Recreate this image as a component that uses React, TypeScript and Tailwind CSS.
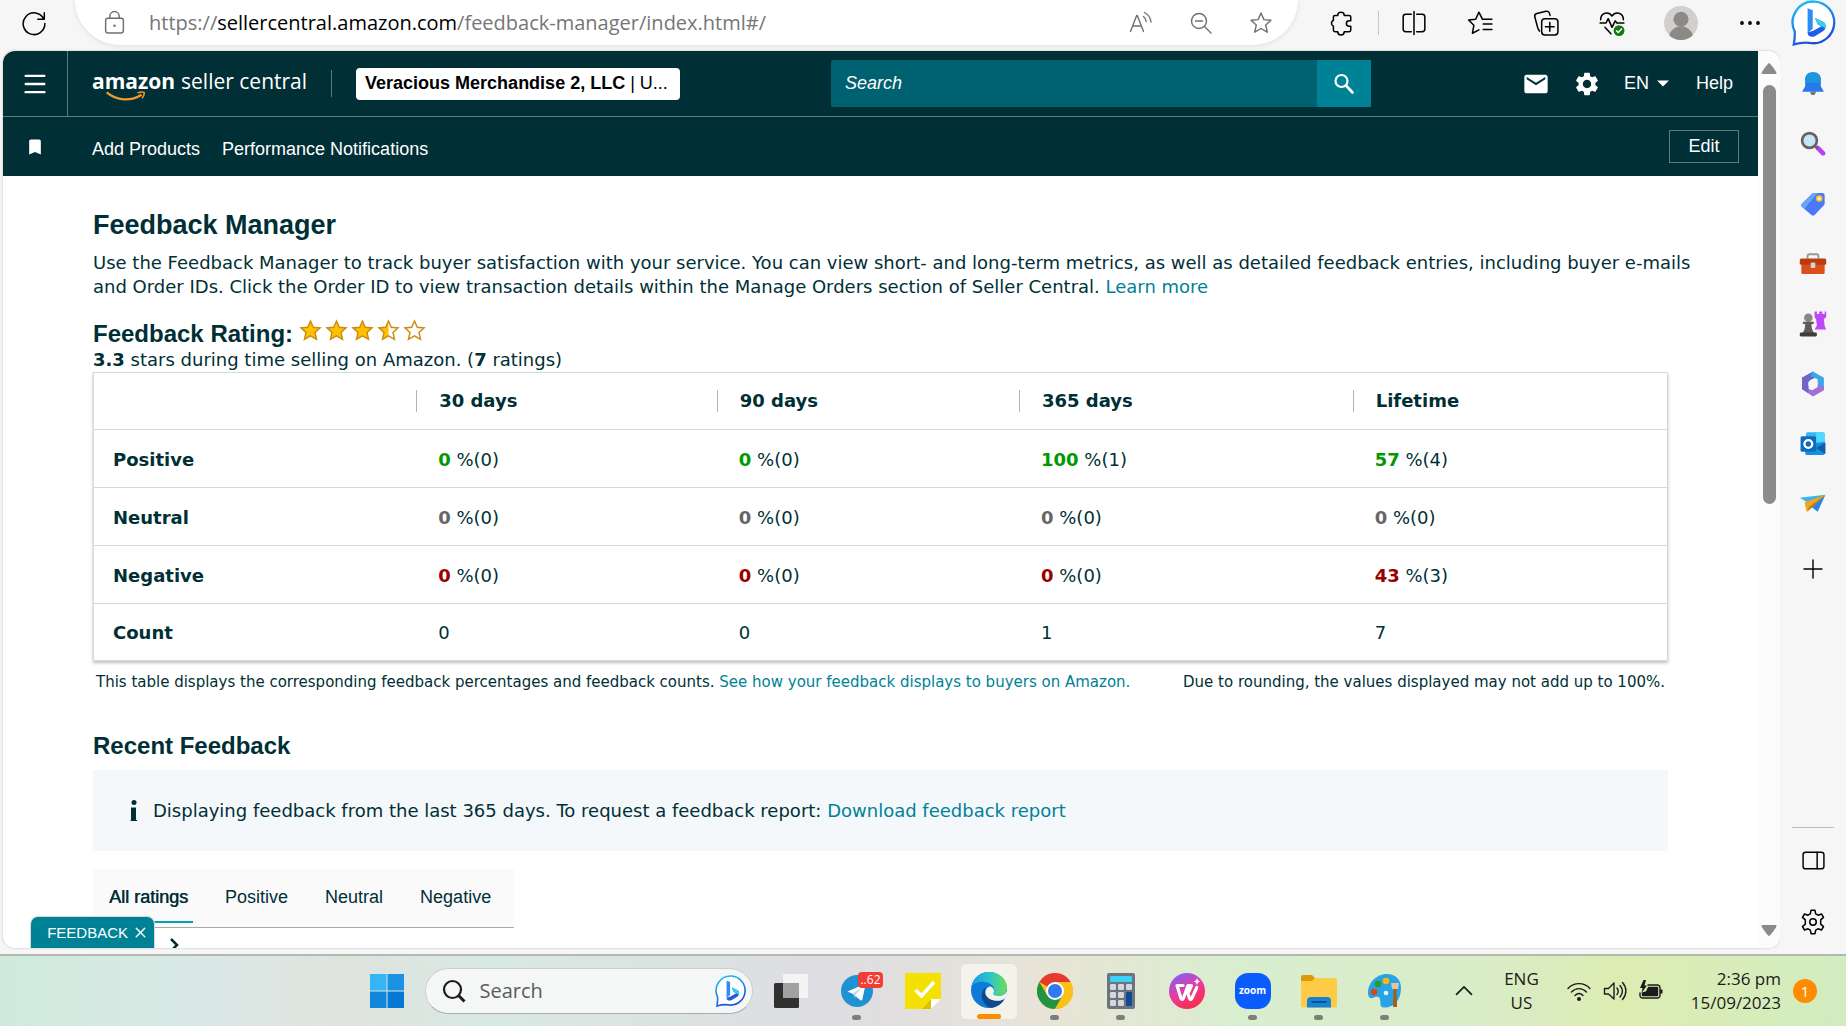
import React from 'react'
import { MdBookmark, MdEmail, MdSettings } from 'react-icons/md'
import { Menu, X } from 'lucide-react'

interface IconProps {
    children: React.ReactNode
    size?: number
    className?: string
}

// 24x24 outline icon
const Outline = ({ children, size = 24, className = '' }: IconProps) => (
    <svg
        width={size}
        height={size}
        viewBox="0 0 24 24"
        fill="none"
        stroke="currentColor"
        strokeWidth="1.4"
        strokeLinecap="round"
        strokeLinejoin="round"
        className={`shrink-0 ${className}`}
        aria-hidden="true"
    >
        {children}
    </svg>
)

// 36x36 coloured app icon
const Glyph = ({ children, size = 36, className = '' }: IconProps) => (
    <svg width={size} height={size} viewBox="0 0 36 36" className={`shrink-0 ${className}`} aria-hidden="true">
        {children}
    </svg>
)

const STAR = 'M12 2 L14.9 8.6 L22 9.3 L16.7 14 L18.3 21.2 L12 17.5 L5.7 21.2 L7.3 14 L2 9.3 L9.1 8.6 Z'
const COG = 'M10.2 1.2h3.6l.7 3.3 2.1 1.2 3.2-1.1 1.9 3.1-2.6 2.3v4l2.6 2.3-1.9 3.1-3.2-1.1-2.1 1.2-.7 3.3h-3.6l-.7-3.3-2.1-1.2-3.2 1.1-1.9-3.1L4.9 14v-4L2.3 7.7l1.9-3.1 3.2 1.1 2.1-1.2z'

const BingIcon = ({ id, size }: { id: string; size: number }) => (
    <Glyph size={size}>
        <defs>
            <linearGradient id={id} x1="0" y1="0" x2="0.4" y2="1">
                <stop offset="0" stopColor="#1fc8f5" />
                <stop offset="1" stopColor="#1b4fdb" />
            </linearGradient>
        </defs>
        <path
            d="M18.5 1.2a16.3 16.3 0 1 1-2 32.6c-5-.9-9-.6-14.3 1 .6-3.400 1-6.500.7-10.200A16.300 16.300 0 0 1 18.500 1.200z"
            fill="#fff"
            stroke={`url(#${id})`}
            strokeWidth="1.8"
        />
        <path d="M13 6.500 17 8v14.500l-4 3.500z" fill="#2f8cf5" />
        <path d="M13 25.500c0 3.500 3.500 4 6 2.600l6-3.600c2.800-1.800 2.800-5.800.4-7.300l-6.600-3.200 2.200 5.200 2.800 1.300-6.400 3.600z" fill="#1f5fe8" />
        <path d="m18.800 14 6.600 3.200c1.700 1 2.200 3 1.500 5l-3.100-1.700-2.800-1.300z" fill="#2ed3ec" />
    </Glyph>
)

const toolbarIcons = [
    {
        name: 'Split screen',
        art: (
            <path d="M9.500 4H4.500A2.500 2.500 0 0 0 2 6.500v11A2.500 2.500 0 0 0 4.500 20h5M14.500 4h5A2.500 2.500 0 0 1 22 6.500v11a2.500 2.500 0 0 1-2.500 2.500h-5M12 1.500v21" />
        ),
    },
    {
        name: 'Favourites',
        art: <path d="M16 8.500h-1.800L11 2 8 8.500l-6.500.8 4.800 4.800L5 21.500l6-3.200M16.500 8.500H23M15 13h8M15 18h8" />,
    },
    {
        name: 'Collections',
        art: (
            <>
                <rect x="8" y="8" width="15" height="15" rx="3" />
                <path d="M15.500 11.500v8M11.500 15.500h8M6 19.500 4.500 17 1.700 6.500A2.600 2.600 0 0 1 3.500 3.300L12 1.200a2.600 2.600 0 0 1 3.200 1.900l.5 1.900" />
            </>
        ),
    },
]

const BrowserToolbar = () => (
    <header className="flex h-[51px] shrink-0 items-start bg-[#f6f6f6] text-black">
        <button aria-label="Refresh" className="mt-[10px] ml-[21px]">
            <Outline size={26}>
                <path d="M21.500 2.500v6h-6M21 8.300A10 10 0 1 0 22 12.500" />
            </Outline>
        </button>
        <div className="ml-7 flex h-[45px] flex-1 items-center rounded-b-full rounded-tl-3xl rounded-tr-3xl bg-white pr-[25px] pl-[27px] text-[#6f6f6f] shadow-[0_1px_5px_#0000001a]">
            <Outline size={25}>
                <rect x="3.500" y="8" width="17" height="14" rx="2" />
                <path d="M7.500 8V6a4.500 4.500 0 0 1 9 0v2" />
                <circle cx="12" cy="15" r="1.200" fill="currentColor" stroke="none" />
            </Outline>
            <p className="ml-[22px] flex-1 font-['Open_Sans',sans-serif] text-[20px] whitespace-nowrap text-[#767676]">
                https://<span className="text-black">sellercentral.amazon.com</span>/feedback-manager/index.html#/
            </p>
            <div className="flex items-center gap-9">
                <button aria-label="Read aloud">
                    <Outline>
                        <path d="m1.500 20.500 6.200-16h.6l6.200 16M3.700 15h8.600M14.500 5.500c1.700 1.200 2.500 2.800 2.700 5M15.500 1.500c3.500 1.800 5.800 5 6.500 9.500" />
                    </Outline>
                </button>
                <button aria-label="Zoom out">
                    <Outline>
                        <circle cx="10" cy="10" r="7.500" />
                        <path d="m15.500 15.500 6.500 6.500M6.500 10h7" />
                    </Outline>
                </button>
                <button aria-label="Add to favourites">
                    <Outline>
                        <path d={STAR} />
                    </Outline>
                </button>
            </div>
        </div>
        <div className="flex h-[45px] items-center pl-[30px]">
            <button aria-label="Extensions">
                <Outline size={26}>
                    <path d="M9 5a3 3 0 0 1 6 0h4.500a1.500 1.500 0 0 1 1.500 1.500V10h-1.500a2.500 2.500 0 0 0 0 5H21v3.500a1.500 1.500 0 0 1-1.500 1.500H15a3 3 0 0 1-6 0H6.500A1.500 1.500 0 0 1 5 18.500V15a3 3 0 0 1 0-5.500v-3A1.500 1.500 0 0 1 6.500 5z" />
                </Outline>
            </button>
            <span className="mr-[22px] ml-6 h-6 w-px bg-[#c8c8c8]" />
            <div className="flex gap-10">
                {toolbarIcons.map((icon) => (
                    <button key={icon.name} aria-label={icon.name}>
                        <Outline size={26}>{icon.art}</Outline>
                    </button>
                ))}
                <button aria-label="Browser essentials">
                    <Outline size={26}>
                        <path d="M1.500 9c0-7 7.500-8 10.500-3.500C15 1 22.500 2 22.500 9M1 12h5.500l2-4 3.500 8 3-6 1.500 2H23M5.500 16l5.500 6" />
                        <circle cx="18.500" cy="19" r="5" fill="#107c10" stroke="none" />
                        <path d="m16.200 19.200 1.600 1.600 3-3.200" stroke="#fff" />
                    </Outline>
                </button>
            </div>
            <button aria-label="Profile" className="ml-[39px]">
                <Glyph size={34}>
                    <circle cx="18" cy="18" r="18" fill="#d2d0ce" />
                    <circle cx="18" cy="14" r="8" fill="#8d8985" />
                    <path d="M5.500 31a13 13 0 0 1 25 0 18 18 0 0 1-25 0z" fill="#8d8985" />
                </Glyph>
            </button>
            <button aria-label="Settings and more" className="ml-10">
                <Outline>
                    <g fill="currentColor" stroke="none">
                        <circle cx="4" cy="12" r="1.900" />
                        <circle cx="12" cy="12" r="1.900" />
                        <circle cx="20" cy="12" r="1.900" />
                    </g>
                </Outline>
            </button>
            <button aria-label="Bing chat" className="mr-[9px] ml-[29px]">
                <BingIcon id="bing-top" size={46} />
            </button>
        </div>
    </header>
)

const SellerHeader = () => (
    <div className="bg-[#002f36] font-['Liberation_Sans',sans-serif] text-[18px] text-white">
        <div className="flex h-[66px] items-center border-b border-[#5f7a7d]">
            <button aria-label="Menu" className="flex h-full w-[65px] items-center justify-center border-r border-[#5f7a7d]">
                <Menu size={28} strokeWidth={2} />
            </button>
            <a href="#home" className="ml-6 flex items-start pb-[5px] font-['Open_Sans',sans-serif] text-[21px] leading-7">
                <span className="relative mr-[6px] font-bold">
                    amazon
                    <svg viewBox="0 0 44 12" className="absolute top-6 left-3 h-[11px] w-[44px]" fill="none" aria-hidden="true">
                        <path d="M1 1.500c11 9.500 26 10 38 2.500" stroke="#f19a2c" strokeWidth="2.600" />
                        <path d="M34.500 1.800c3-.8 5.500-1 7.200-.3.600 2-.6 4.500-2.200 6.500" stroke="#f19a2c" strokeWidth="1.700" />
                    </svg>
                </span>
                seller central
            </a>
            <span className="mr-6 ml-6 h-[27px] w-px bg-[#5f7a7d]" />
            <button className="h-8 w-[324px] shrink-0 rounded-sm bg-white px-[9px] text-left whitespace-nowrap text-black">
                <b>Veracious Merchandise 2, LLC</b> | U...
            </button>
            <form className="ml-[8.6%] flex h-[47px] w-[540px] shrink-0 text-white">
                <input
                    type="text"
                    aria-label="Search"
                    placeholder="Search"
                    className="min-w-0 flex-1 rounded-l-xs bg-[#006170] px-[14px] italic placeholder:text-white"
                />
                <button type="button" aria-label="Go" className="flex w-[54px] items-center justify-center bg-[#008296]">
                    <Outline size={24}>
                        <circle cx="9.500" cy="9" r="6" strokeWidth="2.200" />
                        <path d="m14 13.500 6.500 7" strokeWidth="2.600" />
                    </Outline>
                </button>
            </form>
            <nav className="ml-auto flex items-center pr-[25px]">
                <a href="#mail" aria-label="Messages">
                    <MdEmail size={28} />
                </a>
                <a href="#settings" aria-label="Settings" className="ml-[23px]">
                    <MdSettings size={28} />
                </a>
                <button className="ml-[23px] flex items-center gap-2">
                    EN
                    <svg width="12" height="7" viewBox="0 0 12 7" fill="currentColor" aria-hidden="true">
                        <path d="M0 0.500h12l-6 6z" />
                    </svg>
                </button>
                <a href="#help" className="ml-[27px]">Help</a>
            </nav>
        </div>
        <div className="flex h-[59px] items-center pr-[19px]">
            <MdBookmark size={20} className="ml-[22px]" />
            <nav className="ml-[47px] flex gap-[22px] pt-[6px]">
                <a href="#add-products">Add Products</a>
                <a href="#notifications">Performance Notifications</a>
            </nav>
            <button className="ml-auto h-[33px] w-[70px] border border-[#5f7a7d]">Edit</button>
        </div>
    </div>
)

const columns = ['30 days', '90 days', '365 days', 'Lifetime']
const ratings = [
    { label: 'Positive', color: 'text-[#009900]', values: [[0, 0], [0, 0], [100, 1], [57, 4]] },
    { label: 'Neutral', color: 'text-[#666666]', values: [[0, 0], [0, 0], [0, 0], [0, 0]] },
    { label: 'Negative', color: 'text-[#990000]', values: [[0, 0], [0, 0], [0, 0], [43, 3]] },
]
const counts = [0, 0, 1, 7]

const RatingTable = () => (
    <table className="w-full table-fixed border border-[#d5dbdb] text-left shadow-[0_2px_3px_#00000040]">
        <colgroup>
            <col className="w-[20.5%]" />
            <col className="w-[19.1%]" />
            <col className="w-[19.2%]" />
            <col className="w-[21.2%]" />
            <col className="w-[20%]" />
        </colgroup>
        <thead>
            <tr className="h-[57px]">
                <td />
                {columns.map((name) => (
                    <th key={name}>
                        <div className="flex h-[22px] items-center border-l border-[#aab7b8] pl-[22px]">{name}</div>
                    </th>
                ))}
            </tr>
        </thead>
        <tbody>
            {ratings.map((row) => (
                <tr key={row.label} className="h-[58px] border-t border-[#d5dbdb]">
                    <th className="pt-[2px] pl-[19px]">{row.label}</th>
                    {row.values.map(([percent, count], i) => (
                        <td key={i} className="pt-[2px] pl-[22px]">
                            <b className={row.color}>{percent}</b> %({count})
                        </td>
                    ))}
                </tr>
            ))}
            <tr className="h-[57px] border-t border-[#d5dbdb]">
                <th className="pt-[2px] pl-[19px]">Count</th>
                {counts.map((count, i) => (
                    <td key={i} className="pt-[2px] pl-[22px]">{count}</td>
                ))}
            </tr>
        </tbody>
    </table>
)

const Stars = () => (
    <div className="flex gap-[3px]" role="img" aria-label="3.3 out of 5 stars">
        {['full', 'full', 'full', 'half', 'empty'].map((kind, i) => (
            <svg key={i} width="23" height="23" viewBox="0 0 24 24" aria-hidden="true">
                <path d={STAR} fill={kind === 'full' ? '#ffc000' : '#fff'} />
                {kind === 'half' && <path d="M12 2v15.500l-6.300 3.700L7.300 14 2 9.300l7.100-.7z" fill="#ffc000" />}
                <path d={STAR} fill="none" stroke="#cd8b12" strokeWidth="1.500" />
            </svg>
        ))}
    </div>
)

const tabs = ['All ratings', 'Positive', 'Neutral', 'Negative']

const FeedbackPage = () => (
    <main className="relative min-h-0 flex-1 overflow-hidden pr-[90px] pl-[90px] font-['DejaVu_Sans',sans-serif] text-[18px] leading-6 text-[#002f36]">
        <h1 className="pt-[33px] font-['Liberation_Sans',sans-serif] text-[27px] leading-8 font-bold">Feedback Manager</h1>
        <p className="-mr-6 mt-[10px]">
            Use the Feedback Manager to track buyer satisfaction with your service. You can view short- and long-term metrics, as well as
            detailed feedback entries, including buyer e-mails and Order IDs. Click the Order ID to view transaction details within the
            Manage Orders section of Seller Central.{' '}
            <a href="#learn" className="text-[#008296]">Learn more</a>
        </p>
        <div className="mt-5 flex h-[29px] items-start gap-[6px]">
            <h2 className="font-['Liberation_Sans',sans-serif] text-[24px] leading-[30px] font-bold">Feedback Rating:</h2>
            <Stars />
        </div>
        <p>
            <b>3.3</b> stars during time selling on Amazon. (<b>7</b> ratings)
        </p>
        <RatingTable />
        <div className="flex justify-between px-[3px] pt-[9px] text-[15px]">
            <p>
                This table displays the corresponding feedback percentages and feedback counts.{' '}
                <a href="#display" className="text-[#008296]">See how your feedback displays to buyers on Amazon.</a>
            </p>
            <p>Due to rounding, the values displayed may not add up to 100%.</p>
        </div>
        <h2 className="mt-9 font-['Liberation_Sans',sans-serif] text-[24px] leading-8 font-bold">Recent Feedback</h2>
        <div className="mt-2 flex h-[81px] items-center bg-[#f4f8fa] pl-[37px]">
            <svg width="7" height="22" viewBox="0 0 7 22" fill="currentColor" className="mr-4" aria-hidden="true">
                <circle cx="4" cy="2.500" r="2.500" />
                <path d="M1 7.500h5V20h1v1H.5v-1H1z" />
            </svg>
            <p>
                Displaying feedback from the last 365 days. To request a feedback report:{' '}
                <a href="#report" className="text-[#008296]">Download feedback report</a>
            </p>
        </div>
        <div className="mt-[18px] flex h-[59px] w-fit gap-4 border-b border-[#aaaaaa] bg-[#fafafa] font-['Liberation_Sans',sans-serif]">
            {tabs.map((tab, i) => (
                <button
                    key={tab}
                    className={
                        i === 0
                            ? 'mb-1 border-b-2 border-[#00a4b4] pt-1 pr-[5px] pl-4 [text-shadow:0.5px_0_currentColor]'
                            : 'mb-1 border-b-2 border-transparent pt-1 pr-[5px] pl-4 last:pr-[23px]'
                    }
                >
                    {tab}
                </button>
            ))}
        </div>
        <svg width="12" height="16" viewBox="0 0 12 16" fill="none" stroke="currentColor" strokeWidth="2.500" className="mt-[9px] ml-[76px]" aria-hidden="true">
            <path d="m2 2 6 6-6 6" />
        </svg>
        <button className="absolute bottom-0 left-[27px] flex h-8 w-[125px] items-center justify-end gap-1 rounded-t-lg border border-b-0 border-[#d5dbdb] bg-[#008296] pr-[5px] font-['Liberation_Sans',sans-serif] text-[15px] text-white">
            FEEDBACK
            <X size={17} strokeWidth={2} />
        </button>
    </main>
)

const sidebarIcons = [
    {
        name: 'Notifications',
        art: (
            <>
                <path d="M14 28h8l-2 4h-4z" fill="#77736f" />
                <path d="M18 3c7 0 10 4 10 10v8l4 7H4l4-7v-8C8 7 11 3 18 3z" fill="#2779ea" />
                <path d="M18 3c7 0 10 4 10 10v3H8v-3C8 7 11 3 18 3z" fill="#1f95e0" />
            </>
        ),
    },
    {
        name: 'Search',
        art: (
            <>
                <path d="m24 23 7 7" stroke="#c03cf5" strokeWidth="6" strokeLinecap="round" />
                <path d="m20 20 4 4" stroke="#666" strokeWidth="3" />
                <circle cx="13.500" cy="13.500" r="9.500" fill="#c5e6fa" stroke="#66625f" strokeWidth="3.400" />
            </>
        ),
    },
    {
        name: 'Shopping',
        art: (
            <>
                <path d="M19 4h11a3 3 0 0 1 3 3v10a4 4 0 0 1-1.300 3L20 32a3 3 0 0 1-4 0L4 22a3 3 0 0 1 0-4.500L16.500 5A4 4 0 0 1 19 4z" fill="#4a78f8" />
                <path d="M19 4h5L7 24l-3-2a3 3 0 0 1 0-4.500L16.500 5A4 4 0 0 1 19 4z" fill="#68a5fb" />
                <circle cx="26" cy="11" r="3" fill="#fff" stroke="#f4cb1d" strokeWidth="2.400" />
            </>
        ),
    },
    {
        name: 'Tools',
        art: (
            <>
                <path d="M11 11V8a2.500 2.500 0 0 1 2.500-2.500h9A2.500 2.500 0 0 1 25 8v3" fill="none" stroke="#9a9693" strokeWidth="2.400" />
                <rect x="3" y="17" width="30" height="14" rx="2" fill="#dc4f1c" />
                <rect x="1" y="11" width="34" height="8" rx="2" fill="#b93c10" />
                <rect x="15" y="16" width="6" height="7" rx="1.500" fill="#d5d2cf" />
            </>
        ),
    },
    {
        name: 'Games',
        art: (
            <>
                <path d="M20 2h3v3h3V2h4v3h3V2h2v7l-3 3 1 9 2 4H20l3-5-1-8-2-3z" fill="#bd4af8" />
                <circle cx="12" cy="10" r="5.500" fill="#8b8785" />
                <path d="M5 15h14v3h-3c0 5 1 9 4 12H4c3-3 4-7 4-12H5z" fill="#5f5b59" />
                <rect x="1" y="29" width="22" height="5" rx="1.500" fill="#3f3c3a" />
            </>
        ),
    },
    {
        name: 'Microsoft 365',
        art: (
            <>
                <path d="M18 2 4 9.500v15L12 30V15l10-6z" fill="#4c70cf" />
                <path d="m18 2 14 8v16l-8-5v-9l-9-4z" fill="#39a7e8" />
                <path d="M4 24.500 18 34l14-8v-4l-8-4v4l-7 4-5-2z" fill="#a36fd4" />
                <path d="M4 9.500v15l8 5V15l4-9z" fill="#7564c8" />
                <circle cx="18" cy="18" r="6" fill="#f6f6f6" />
            </>
        ),
    },
    {
        name: 'Outlook',
        art: (
            <>
                <rect x="9" y="3" width="24" height="24" rx="2" fill="#35b8f1" />
                <path d="M22 3h9a2 2 0 0 1 2 2v11H22z" fill="#50d9ff" />
                <path d="M8 19 33 15v15a2 2 0 0 1-2 2H10a2 2 0 0 1-2-2z" fill="#1490df" />
                <path d="m22 23 12-7v15z" fill="#0f5ea8" />
                <rect x="2" y="8" width="20" height="20" rx="2" fill="#0f6cbd" />
                <circle cx="12" cy="18" r="5" fill="none" stroke="#fff" strokeWidth="3" />
            </>
        ),
    },
    {
        name: 'Drop',
        art: (
            <>
                <path d="M1 10 34 6 14 18z" fill="#3eb1f0" />
                <path d="M34 6 15 21l9 7z" fill="#2b83ea" />
                <path d="M34 6 7 16l3 12z" fill="#f2a51e" />
                <path d="m34 6-20 15-4 7 5-4z" fill="#c47b0a" />
            </>
        ),
    },
]

const Sidebar = () => (
    <aside className="flex w-[66px] shrink-0 flex-col items-center bg-[#f6f6f6] pt-[19px] text-black">
        <div className="flex flex-col gap-8">
            {sidebarIcons.map((icon) => (
                <button key={icon.name} aria-label={icon.name}>
                    <Glyph size={28}>{icon.art}</Glyph>
                </button>
            ))}
        </div>
        <button aria-label="Add" className="mt-[39px]">
            <Outline size={24}>
                <path d="M12 3v18M3 12h18" />
            </Outline>
        </button>
        <div className="mt-auto flex w-[42px] flex-col items-center gap-9 border-t border-[#bdbdbd] pt-5 pb-[19px]">
            <button aria-label="Hide sidebar">
                <Outline size={25}>
                    <rect x="2" y="4" width="20" height="16" rx="2.500" />
                    <path d="M15.500 4v16" />
                </Outline>
            </button>
            <button aria-label="Sidebar settings">
                <Outline size={26}>
                    <path d={COG} />
                    <circle cx="12" cy="12" r="3" />
                </Outline>
            </button>
        </div>
    </aside>
)

const Scrollbar = () => (
    <div className="flex w-[22px] shrink-0 flex-col items-center bg-[#fcfcfc] py-3 text-[#8b8b8b]">
        <svg width="16" height="11" viewBox="0 0 16 11" fill="currentColor" aria-hidden="true">
            <path d="M8 0c1 0 8 9 7.500 10.500S1 11.500.5 10.500 7 0 8 0z" />
        </svg>
        <div className="mt-[11px] h-[48%] w-[13px] rounded-full bg-[#8b8b8b]" />
        <svg width="16" height="11" viewBox="0 0 16 11" fill="currentColor" className="mt-auto" aria-hidden="true">
            <path d="M8 11c1 0 8-9 7.500-10.500S1-.5.500.5 7 11 8 11z" />
        </svg>
    </div>
)

const taskbarApps = [
    {
        name: 'Task view',
        state: '',
        art: (
            <>
                <rect x="1" y="10" width="25" height="25" rx="1.500" fill="#30302f" />
                <rect x="10" y="1" width="25" height="24" rx="1" fill="#f4f4f4" />
                <path d="M10 10h16v15H10z" fill="#a2a2a2" />
            </>
        ),
    },
    {
        name: 'Telegram',
        state: 'open',
        badge: '..62',
        art: (
            <>
                <circle cx="18" cy="18" r="16" fill="#1f93d1" />
                <path d="M8.500 18.500 25 11.500c1-.4 1.500.3 1.300 1.200l-3 13.800c-.2 1-1 1.200-1.800.7L14 21z" fill="#fff" />
                <path d="m14 20.500 9-6.500-6.500 8-.3 3.500z" fill="#b8d9ee" />
            </>
        ),
    },
    {
        name: 'Notes',
        state: '',
        art: (
            <>
                <path d="M0 0h36v26L26 36H0z" fill="#f5e003" />
                <path d="M26 26 17 36h9z" fill="#d8c300" />
                <path d="M26 26h10L26 36z" fill="#fff" />
                <path d="m10.500 17 6 6L29 9" fill="none" stroke="#fff" strokeWidth="3.600" />
            </>
        ),
    },
    {
        name: 'Edge',
        state: 'active',
        art: (
            <>
                <defs>
                    <linearGradient id="edge-wave" x1="0" y1="0.500" x2="1" y2="0.500">
                        <stop offset="0" stopColor="#1b9de2" />
                        <stop offset="0.500" stopColor="#2ac3d0" />
                        <stop offset="1" stopColor="#6be04f" />
                    </linearGradient>
                </defs>
                <circle cx="18" cy="18" r="18" fill="#0c7ad6" />
                <path d="M.5 15C2 6 9 0 18 0c10 0 18 7 18 15.500 0 5-4 8.500-8.500 8.500-4 0-6-1.500-5-3 2.500-4-.5-9-6.500-10.500C9 8.500 3 11 .5 15z" fill="url(#edge-wave)" />
                <path d="M15 15c-4 3-5.500 8-3.500 13 2 4.500 6 8 9.500 7.700 5.500-1 10-4 12.300-8.700-7 4-17 1-18.800-5-.8-2.600-.3-5 .5-7z" fill="#114a8b" />
                <path d="M22.500 21c-1 1.500 1 3 5 3 4 0 7-2 8-5 1 4-.7 7-2.200 8-7 4-17 1-18.800-5-.6-5 2.500-7.500 5-7.500 3 1 4.500 4 3 6.500z" fill="#f0f4ee" />
            </>
        ),
    },
    {
        name: 'Chrome',
        state: 'open',
        art: (
            <>
                <circle cx="18" cy="18" r="18" fill="#fbc116" />
                <path d="M18 18 2.400 9A18 18 0 0 1 33.600 9z" fill="#e33b2e" />
                <path d="M2.400 9A18 18 0 0 0 18 36l7.800-13.500L18 18 10.200 22.500z" fill="#229342" />
                <path d="M18 9h15.600A18 18 0 0 1 18 36l7.800-13.500z" fill="#fbc116" />
                <circle cx="18" cy="18" r="9" fill="#fff" />
                <circle cx="18" cy="18" r="7" fill="#2f7af0" />
            </>
        ),
    },
    {
        name: 'Calculator',
        state: 'open',
        art: (
            <>
                <rect x="4" y="0" width="28" height="36" rx="2" fill="#6c757d" />
                <rect x="7" y="3" width="22" height="6" rx="1" fill="#3cd2f5" />
                {[11, 19, 27].map((y) => (
                    <g key={y} fill="#d4d8de">
                        <rect x="7" y={y} width="6" height="6" rx="1.200" />
                        <rect x="15" y={y} width="6" height="6" rx="1.200" />
                    </g>
                ))}
                <rect x="23" y="11" width="6" height="6" rx="1.200" fill="#d4d8de" />
                <rect x="23" y="19" width="6" height="14" rx="1.200" fill="#0f4a94" />
            </>
        ),
    },
    {
        name: 'WPS Office',
        state: '',
        art: (
            <>
                <defs>
                    <linearGradient id="wps" x1="0.200" y1="0" x2="0.700" y2="1">
                        <stop offset="0" stopColor="#7d62fa" />
                        <stop offset="0.500" stopColor="#e93aa0" />
                        <stop offset="1" stopColor="#fb2c42" />
                    </linearGradient>
                </defs>
                <circle cx="18" cy="18" r="18" fill="url(#wps)" />
                <path
                    d="M14 12.500H8l4 13c.5 1.200 1.800 1.200 2.300 0l4.700-13h3.500l-3.500 8 1.500 5c.5 1.200 1.800 1.200 2.300 0l5-11"
                    fill="none"
                    stroke="#fff"
                    strokeWidth="3.200"
                    strokeLinejoin="round"
                    strokeLinecap="round"
                />
                <path d="m28 5 1 2.500 2.500 1-2.500 1-1 2.500-1-2.500-2.500-1 2.500-1z" fill="#fff" />
            </>
        ),
    },
    {
        name: 'Zoom',
        state: 'open',
        label: 'zoom',
        art: <rect width="36" height="36" rx="13" fill="#0b5cff" />,
    },
    {
        name: 'File Explorer',
        state: 'open',
        art: (
            <>
                <path d="M0 4a2 2 0 0 1 2-2h9l4 4-3 5H0z" fill="#dc9a08" />
                <path d="M0 8h11l3-3h20a2 2 0 0 1 2 2v26a1.500 1.500 0 0 1-1.500 1.500h-33A1.500 1.500 0 0 1 0 33z" fill="#fdcb45" />
                <path d="M6 34.500V28a4 4 0 0 1 4-4h16a4 4 0 0 1 4 4v6.500z" fill="#1683d4" />
                <path d="M10.500 29h15" stroke="#0b4f95" strokeWidth="2" />
            </>
        ),
    },
    {
        name: 'Paint',
        state: 'open',
        art: (
            <>
                <path d="M20 1C9 1 1 10 1 20c0 4 2 6 5 5 3-1.500 6-2 7 1 1 4-1 8 4 8.500C27 35 34 27 34 15 34 6 28 1 20 1z" fill="#26a4e6" />
                <circle cx="7" cy="19" r="3.300" fill="#d6471f" />
                <circle cx="11" cy="11" r="3.300" fill="#2f9b22" />
                <circle cx="19" cy="8" r="3.300" fill="#f7b90f" />
                <circle cx="19" cy="20" r="2.300" fill="#e8f4f4" />
                <path d="M24 10h8l-1 6h-6z" fill="#e5c4a0" />
                <path d="M26.500 16h3l.5 18h-4z" fill="#a65d19" />
            </>
        ),
    },
]

const dotStyle: Record<string, string> = {
    '': 'w-2 bg-transparent',
    open: 'w-[9px] bg-[#7d8078]',
    active: 'w-6 bg-[#ff8c00]',
}

const Taskbar = () => (
    <footer className="relative flex h-[72px] shrink-0 items-center justify-center border-t-2 border-[#b1b9b0] bg-[linear-gradient(90deg,#cfeadd_0%,#dae8e6_11%,#dfe3de_19%,#d8e9e2_26%,#dedde2_45%,#e8e4d7_57%,#d9eecf_67%,#d9ecc8_80%,#dcedb2_88%,#d2ecc0_100%)] font-['Open_Sans',sans-serif] text-[#1b1b1b]">
        <div className="mr-[60px] flex items-center">
            <button aria-label="Start">
                <Glyph size={36}>
                    <path d="M1 1h16.500v16.500H1z" fill="#35b5f3" />
                    <path d="M18.500 1H35v16.500H18.500z" fill="#1c93e2" />
                    <path d="M1 18.500h16.500V35H1z" fill="#1186dc" />
                    <path d="M18.500 18.500H35V35H18.500z" fill="#0678d4" />
                </Glyph>
            </button>
            <label className="ml-5 flex h-[46px] w-[328px] items-center rounded-full border border-[#c9d0ce] border-b-[#a9adb0] bg-[#f5f7f7] pr-[5px] pl-4">
                <svg width="24" height="24" viewBox="0 0 24 24" fill="none" stroke="#1b1b1b" strokeWidth="2.200" aria-hidden="true">
                    <circle cx="10.500" cy="10.500" r="8.500" />
                    <path d="m16.500 16.500 6 6" strokeWidth="3" />
                </svg>
                <input
                    type="text"
                    aria-label="Search Windows"
                    placeholder="Search"
                    className="ml-[14px] min-w-0 flex-1 text-[20px] placeholder:text-[#5b5b5b]"
                />
                <BingIcon id="bing-task" size={32} />
            </label>
            <div className="ml-[5px] flex">
                {taskbarApps.map((app) => (
                    <button
                        key={app.name}
                        aria-label={app.name}
                        className={
                            app.state === 'active'
                                ? 'relative mx-[4px] flex h-[57px] w-[58px] flex-col items-center justify-end rounded-md border border-[#e0e2da] bg-[#f3f3ec]'
                                : 'relative flex h-[57px] w-[66px] flex-col items-center justify-end'
                        }
                    >
                        <Glyph size={36}>{app.art}</Glyph>
                        {app.label && <span className="absolute top-[19px] text-[10px] leading-4 font-bold text-white">{app.label}</span>}
                        {app.badge && (
                            <span className="absolute top-[9px] right-[7px] rounded bg-[#f23c34] px-[2px] text-[12px] leading-4 text-white">{app.badge}</span>
                        )}
                        <span className={`mt-[6px] h-[5px] rounded-full ${dotStyle[app.state]}`} />
                    </button>
                ))}
            </div>
        </div>
        <div className="absolute right-[29px] flex items-center text-[17px] leading-6">
            <button aria-label="Show hidden icons">
                <Outline size={20}>
                    <path d="m3 16 9-9 9 9" strokeWidth="2" />
                </Outline>
            </button>
            <div className="ml-[30px] text-center">
                <p>ENG</p>
                <p>US</p>
            </div>
            <div className="ml-7 flex items-center gap-3">
                <Outline size={24}>
                    <path d="M1 9.500C7 3 17 3 23 9.500M4.500 13c4.500-4.500 10.500-4.500 15 0M8 16.500c2.500-2.500 5.500-2.500 8 0" />
                    <circle cx="12" cy="20" r="2" fill="currentColor" stroke="none" />
                </Outline>
                <Outline size={24}>
                    <path d="M1.500 9.500v5.500h4l5.500 5v-16l-5.500 5.500zM14 9c1.500 2 1.500 4.500 0 6.500M17 6.500c3 3.500 3 8 0 11.500M19.500 3.500c4.500 5 4.500 12 0 17" />
                </Outline>
                <Outline size={24}>
                    <path d="M9 6h9.500A2.500 2.500 0 0 1 21 8.500v8a2.500 2.500 0 0 1-2.500 2.500h-15A2.500 2.500 0 0 1 1 16.500V14" />
                    <path d="M9.500 8.500h9v8h-15V14l4-1z" fill="currentColor" />
                    <path d="M4.500 1 1 9h2.500l-1 5L8 6.500H5.500L7 1zM21 10.500h2.500v4H21z" fill="currentColor" stroke="none" />
                </Outline>
            </div>
            <div className="ml-7 text-right">
                <p>2:36 pm</p>
                <p>15/09/2023</p>
            </div>
            <span className="ml-3 size-6 rounded-full bg-[#ff8c00] text-center text-[15px] leading-6 text-white">1</span>
        </div>
    </footer>
)

const App = () => (
    <div className="flex h-screen flex-col overflow-hidden">
        <BrowserToolbar />
        <div className="flex min-h-0 flex-1 bg-[#f6f6f6]">
            <div className="mb-[6px] ml-[3px] flex min-w-0 flex-1 overflow-hidden rounded-xl bg-white shadow-[0_0_2px_1px_#0000001a]">
                <div className="flex min-w-0 flex-1 flex-col">
                    <SellerHeader />
                    <FeedbackPage />
                </div>
                <Scrollbar />
            </div>
            <Sidebar />
        </div>
        <Taskbar />
    </div>
)

export default App
